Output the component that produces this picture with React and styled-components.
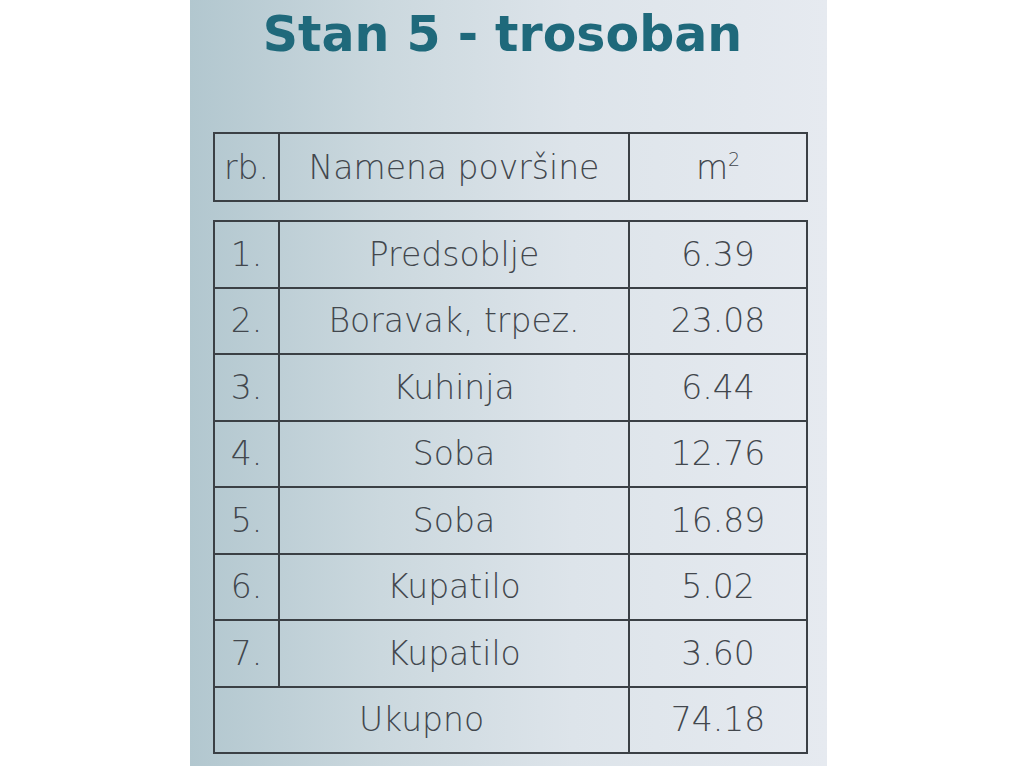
import React from 'react';
import styled, { createGlobalStyle } from 'styled-components';

const GlobalStyle = createGlobalStyle`
  html, body {
    margin: 0;
    padding: 0;
    background: #fff;
  }
`;

const Page = styled.div`
  width: 1024px;
  height: 768px;
  display: flex;
  justify-content: flex-start;
  background: #fff;
`;

const Panel = styled.section`
  margin-left: 190px;
  width: 637px;
  height: 766px;
  box-sizing: border-box;
  padding: 0 21px 0 23px;
  background: linear-gradient(90deg, #b2c7cf 0%, #cbd8de 30%, #dde4ea 60%, #e6eaf0 100%);
  font-family: 'DejaVu Sans', 'Liberation Sans', sans-serif;
  color: #4d5257;
`;

const Title = styled.h1`
  margin: 0;
  height: 132px;
  padding: 2px 14px 0 0;
  box-sizing: border-box;
  text-align: center;
  font-size: 49px;
  font-weight: bold;
  color: #1f697b;
  line-height: 66px;
`;

const Table = styled.table`
  width: 593px;
  border-collapse: collapse;
  table-layout: fixed;
  margin-bottom: ${({ $gap }) => $gap || 0}px;
`;

const Cell = styled.td`
  border: 2px solid #3b4045;
  height: ${({ $h }) => $h}px;
  padding: 0;
  text-align: center;
  vertical-align: middle;
  font-size: 33px;
  font-weight: 300;
  color: #42474d;
  white-space: nowrap;
`;

const Sup = styled.sup`
  font-size: 19px;
  vertical-align: 13px;
  line-height: 0;
`;

const rows = [
  ['1.', 'Predsoblje', '6.39'],
  ['2.', 'Boravak, trpez.', '23.08'],
  ['3.', 'Kuhinja', '6.44'],
  ['4.', 'Soba', '12.76'],
  ['5.', 'Soba', '16.89'],
  ['6.', 'Kupatilo', '5.02'],
  ['7.', 'Kupatilo', '3.60'],
];

const Cols = () => (
  <colgroup>
    <col style={{ width: 65 }} />
    <col style={{ width: 350 }} />
    <col style={{ width: 178 }} />
  </colgroup>
);

const App = () => (
  <Page>
    <GlobalStyle />
    <Panel>
      <Title>Stan 5 - trosoban</Title>
      <Table $gap={18}>
        <Cols />
        <tbody>
          <tr>
            <Cell $h={66}>rb.</Cell>
            <Cell $h={66}>Namena površine</Cell>
            <Cell $h={66}>
              m<Sup>2</Sup>
            </Cell>
          </tr>
        </tbody>
      </Table>
      <Table>
        <Cols />
        <tbody>
          {rows.map(([n, name, area]) => (
            <tr key={n}>
              <Cell $h={64.5}>{n}</Cell>
              <Cell $h={64.5}>{name}</Cell>
              <Cell $h={64.5}>{area}</Cell>
            </tr>
          ))}
          <tr>
            <Cell $h={64.5} colSpan={2}>Ukupno</Cell>
            <Cell $h={64.5}>74.18</Cell>
          </tr>
        </tbody>
      </Table>
    </Panel>
  </Page>
);

export default App;
